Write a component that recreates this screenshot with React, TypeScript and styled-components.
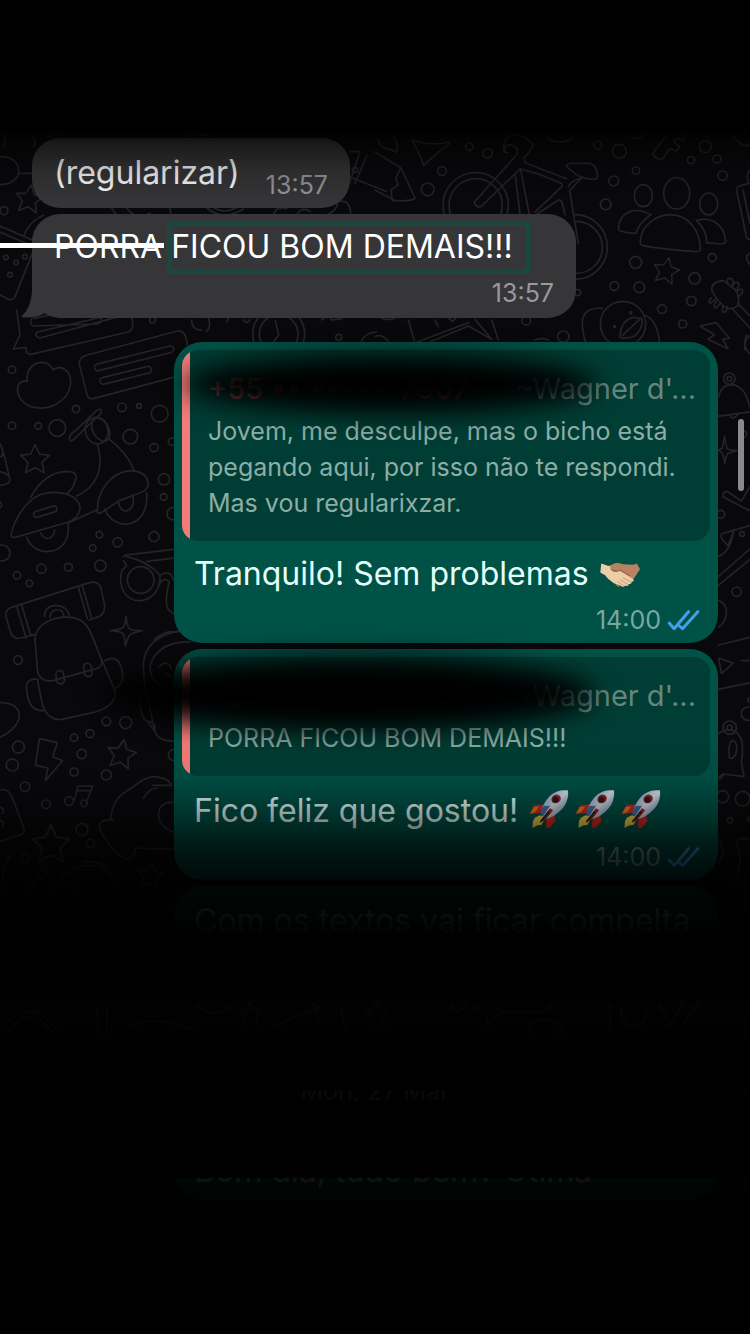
import React from "react";
import styled, { createGlobalStyle } from "styled-components";

const GlobalStyle = createGlobalStyle`
  * { box-sizing: border-box; }
  body {
    margin: 0;
    background: #000;
    font-family: Inter, Roboto, "Liberation Sans", sans-serif;
  }
`;

const Screen = styled.div`
  position: relative;
  min-height: 100vh;
  background: #09090c;
  overflow: hidden;
`;

const WallpaperSvg = styled.svg`
  position: absolute;
  top: 0;
  left: 0;
  width: 100%;
  height: auto;
  fill: none;
  stroke: #242426;
  stroke-width: 5;
  stroke-linejoin: round;
  stroke-linecap: round;
`;

const Chat = styled.main`
  position: relative;
  display: flex;
  flex-direction: column;
  gap: 6px;
  padding: 138px 32px 128px;
`;

const Bubble = styled.article<{ $mine?: boolean }>`
  position: relative;
  align-self: ${(p) => (p.$mine ? "flex-end" : "flex-start")};
  width: 100%;
  max-width: 544px;
  border-radius: 28px;
  padding: ${(p) => (p.$mine ? "8px" : "12px 22px 10px")};
  background: ${(p) => (p.$mine ? "#005146" : "#363638")};
  color: ${(p) => (p.$mine ? "#e4fffa" : "#fff")};
`;

const ShortBubble = styled(Bubble)`
  display: flex;
  justify-content: space-between;
  align-items: flex-end;
  max-width: 318px;
  padding: 14px 22px 8px;
`;

const FirstReply = styled(Bubble)`
  margin-top: 18px;
`;

const TextBubble = styled(Bubble)`
  padding-top: 2px;
`;

const Message = styled.p<{ $mine?: boolean }>`
  margin: 0;
  padding: ${(p) => (p.$mine ? "12px 12px 0" : "0")};
  font-size: 32px;
  line-height: 42px;
  white-space: nowrap;
`;

const ShortMessage = styled(Message)`
  padding-bottom: 6px;
`;

const Meta = styled.footer<{ $mine?: boolean }>`
  display: flex;
  justify-content: flex-end;
  align-items: center;
  gap: 6px;
  margin-top: 10px;
  padding-right: ${(p) => (p.$mine ? "10px" : "0")};
  font-size: 25px;
  line-height: 30px;
  color: ${(p) => (p.$mine ? "#7da69e" : "#98989e")};
`;

const ShortMeta = styled(Meta)`
  margin-top: 0;
`;

const Quote = styled.blockquote`
  margin: 0;
  padding: 20px 14px 20px 26px;
  border-radius: 16px;
  background: linear-gradient(to right, #f47b78 8px, #003d34 8px);
  color: #8dada7;
  font-size: 25px;
  line-height: 36px;
`;

const QuoteHead = styled.header`
  display: flex;
  justify-content: space-between;
  margin-bottom: 5px;
  font-size: 29px;
  line-height: 38px;
  white-space: nowrap;
`;

const Phone = styled.span`
  font-weight: 500;
  color: #a8504e;
`;

const Author = styled.span`
  color: #66877f;
`;

const QuoteLine = styled.p`
  margin: 0;
  white-space: nowrap;
`;

const Struck = styled.s`
  position: relative;
  text-decoration: none;
  &::after {
    content: "";
    position: absolute;
    left: -56px;
    right: -2px;
    top: 50%;
    height: 5px;
    margin-top: -4px;
    background: #fff;
  }
`;

const Marked = styled.mark`
  position: relative;
  background: none;
  color: inherit;
  &::after {
    content: "";
    position: absolute;
    inset: -6px -18px -8px -4px;
    border: 5px solid #1b473e;
  }
`;

const Tail = styled.svg`
  position: absolute;
  left: -12px;
  bottom: 0;
  width: 40px;
  height: 32px;
  fill: #363638;
`;

const Smudge = styled.div<{ $left: number; $right: number; $top: number; $height: number }>`
  position: absolute;
  left: ${(p) => p.$left}px;
  right: ${(p) => p.$right}px;
  top: ${(p) => p.$top}px;
  height: ${(p) => p.$height}px;
  border-radius: 50%;
  background: #000;
  filter: blur(13px);
`;

const Day = styled.time`
  align-self: center;
  margin-top: 120px;
  margin-bottom: 24px;
  font-size: 25px;
  line-height: 30px;
  color: #999;
`;

const Shade = styled.div`
  position: absolute;
  inset: 0;
  pointer-events: none;
  background: linear-gradient(
    to bottom,
    #000 0, #000 130px,
    rgba(0, 0, 0, 0.55) 142px,
    rgba(0, 0, 0, 0.2) 170px,
    rgba(0, 0, 0, 0) 205px,
    rgba(0, 0, 0, 0) 740px,
    rgba(0, 0, 0, 0.08) 780px,
    rgba(0, 0, 0, 0.35) 812px,
    rgba(0, 0, 0, 0.68) 845px,
    rgba(0, 0, 0, 0.84) 872px,
    rgba(0, 0, 0, 0.93) 892px,
    rgba(0, 0, 0, 0.95) 915px,
    #000 938px, #000 1000px,
    rgba(0, 0, 0, 0.8) 1001px,
    rgba(0, 0, 0, 0.88) 1030px,
    #000 1048px, #000 1090px,
    rgba(0, 0, 0, 0.93) 1091px,
    rgba(0, 0, 0, 0.96) 1101px,
    #000 1102px, #000 1177px,
    rgba(0, 0, 0, 0.93) 1178px,
    rgba(0, 0, 0, 0.95) 1199px,
    #000 1200px
  );
`;

const ScrollThumb = styled.div`
  position: absolute;
  top: 419px;
  right: 6px;
  width: 6px;
  height: 72px;
  border-radius: 3px;
  background: #89898b;
`;

const EmojiSvg = styled.svg<{ $tall?: boolean }>`
  width: 42px;
  height: ${(p) => (p.$tall ? 42 : 30)}px;
  margin-left: 1px;
  margin-right: 3px;
  vertical-align: ${(p) => (p.$tall ? "-8px" : "-5px")};
`;

const TicksSvg = styled.svg`
  width: 33px;
  height: 22px;
  fill: none;
  stroke: #429fe8;
  stroke-width: 9;
  stroke-linecap: round;
  stroke-linejoin: round;
`;

const Ticks = () => (
  <TicksSvg viewBox="650 818 98 66" role="img" aria-label="Lida">
    <path d="M656 860l15 17 43-51M687 869l9 8 46-51" />
  </TicksSvg>
);

const Handshake = () => (
  <EmojiSvg viewBox="30 30 130 85" role="img" aria-label="Aperto de mãos">
    <path fill="#b98260" d="M64 43l15-7c8-2 16 0 24 3l34 2 10-4 10 18-18 27-8 7-32-26-17-3-12-4c-7-5-8-9-6-13z" />
    <path fill="#eccda6" d="M37 37l20 7 9 1c-3 7 1 13 8 15 7 3 15 1 20-1l24 14 18 12c3 4 0 9-5 8 1 6-4 9-9 7 0 6-6 8-11 5-3 6-10 5-15 1L76 98 58 84 49 73 34 65z" />
    <path fill="none" stroke="#c99c76" strokeWidth="3" strokeLinecap="round" d="M105 82l24 12M96 88l23 14M88 94l18 12M82 101l9 7M66 45c-3 8 2 14 9 16" />
    <path fill="none" stroke="#8e5f45" strokeWidth="3" d="M68 55c9 7 19 8 28 2l30 19" />
  </EmojiSvg>
);

const Rocket = ({ id }: { id: string }) => (
  <EmojiSvg $tall viewBox="22 20 130 130" role="img" aria-label="Foguete">
    <defs>
      <linearGradient id={id} x1="0" y1="0" x2="1" y2="1">
        <stop offset="0" stopColor="#5f93c9" />
        <stop offset=".5" stopColor="#dde4ec" />
        <stop offset="1" stopColor="#4a78ad" />
      </linearGradient>
    </defs>
    <path fill="#e5cf49" d="M58 104l20 4-14 26-14 2-14 8 1-20 6-12z" />
    <path fill="#d8281d" d="M42 73l30-2-12 26-34 4z" />
    <path fill="#ef7a24" d="M40 79l16-1-12 17-16 4z" />
    <path fill="#d8281d" d="M80 115l22-12 5 18-17 22-13 1 1-13z" />
    <path fill={`url(#${id})`} d="M146 28c3 34-12 57-44 79L80 116 61 98c7-30 25-59 53-68 11-4 23-4 32-2z" />
    <path fill="#3f70ac" d="M70 76c-6 8-8 15-9 22l9 8 20-31z" />
    <path fill="#a62323" d="M90 83L60 121l12 2 28-34z" />
    <path fill="#2d2628" d="M84 91l-26 34 5 2 28-33z" />
    <ellipse cx="109" cy="54" rx="15" ry="13" fill="#8e2427" transform="rotate(-30 109 54)" />
    <ellipse cx="107" cy="56" rx="9" ry="9" fill="#2b1a20" />
  </EmojiSvg>
);

const STAR = "M0-42L13-14 43-10 21 11 28 42 0 27-28 42-21 11-43-10-13-14z";

const Dots = ({ at }: { at: number[][] }) => (
  <>
    {at.map(([x, y, r]) => (
      <circle key={`${x}-${y}`} cx={x} cy={y} r={r} />
    ))}
  </>
);

const Wallpaper = () => (
  <WallpaperSvg viewBox="0 0 750 1334" aria-hidden="true">
    <g transform="translate(0 120) scale(.33333)">
      <path d="M0 110c34-2 56 18 56 42S34 194 0 194M56 160h42M0 40c18 0 20 24 10 40M100 50q10 20 0 30" />
      <path transform="translate(88 235) scale(.95) rotate(8)" d={STAR} />
      <Dots at={[[12, 272, 12], [18, 412, 7], [48, 427, 7], [75, 410, 7], [30, 464, 7], [1016, 652, 9], [458, 600, 9], [1065, 150, 8]]} />
      <path d="M0 318l97 42M0 336l97 42M72 345q20-45 60-60M97 400L45 530q-6 12-20 8L0 525" />
      <path d="M335 264l20 30M380 264q30 40 70 16M510 264q0 40 40 30M620 264q50 40 110 4M640 262q34 22 70 0M820 285q10-30 40-18M890 284q15-25 40-10M980 285q40-20 30-40 40-10 42 35M150 50q10-10 30-8M560 50q40-15 70 0" />
      <circle cx="836" cy="642" r="78" /><circle cx="836" cy="642" r="58" />
      <path d="M826 602l10 42-18 26M575 600q0 30 30 30M620 634q14-14 6-38M680 606l6-12M730 600q10 14 20 0M965 600q20-20 30 0l30-4M1080 690q0-50 50-54" />
      <path d="M1050 95h30M1048 170l110 44M1080 95l-32 95M1100 108l-36 84" />
    </g>

    <g transform="translate(375 120) scale(.33333)">
      <path d="M0 96l78 48 42 90q-6 10-60 8L0 210M78 144l-16 30 8 20-22 16 4 32M110 60q60 20 112 6 6 6-20 20l-56 50q-8-30-36-76zM8 55q4 30 40 34l16 8q10-20-10-50" />
      <circle cx="302" cy="256" r="98" /><circle cx="302" cy="256" r="80" />
      <path d="M298 246l122-136q16-16 0-30-22-14-32 6 0 14 10 12-16 2-12-20 4-32 34-34 30 2 54 30-2 14-24 36-8 10 4 20l120 46M318 260q-16 4-20-14M318 260l118-114M420 160l16 130M436 146l28 142M440 148q60 14 118 42 8 4 0 12l-78 74M574 138q6-10 20-8h50q20 4 24 38-2 12-16 10-40-4-60-24-10-6-18-16zM580 200q10-20 40-26l-36 38 26 158M480 286l70-46q8-2 12 10l8 34" />
      <path d="M600 284a97 97 0 1 1 0 194M604 304a78 78 0 1 1 0 156M515 50q10 16 40 16 34-4 38-16M770 50q20 16 36-8" />
      <ellipse cx="805" cy="227" rx="27" ry="33" /><ellipse cx="905" cy="220" rx="39" ry="47" /><ellipse cx="1001" cy="252" rx="27" ry="33" />
      <path d="M796 366c0-50 50-82 90-82 56 0 90 50 90 104-2 8-10 8-20 6-60-4-110-8-154-18-6-2-8-6-6-10zM828 284c-50-26-94-10-98 42 0 8 22 12 54 14 4-20 20-40 44-56zM964 302c44-14 84 10 88 62 0 6-6 8-14 8l-44-4c4-20-10-50-30-66zM870 50l-36 50q0 10 16 16 10 6 16-4l18-26 20 8 10-14-18-14 8-12 20 8 14-20M1074 50q40 40 51 22" />
      <path transform="translate(874 450) scale(.9) rotate(12)" d={STAR} />
      <Dots at={[[283, 80, 11], [338, 100, 14], [201, 153, 13], [158, 208, 19], [668, 75, 12], [733, 94, 21], [783, 152, 11], [716, 183, 15], [692, 253, 16], [991, 80, 18], [948, 120, 11], [1026, 117, 12], [1043, 167, 14], [1012, 413, 12], [782, 427, 18], [718, 498, 13], [793, 502, 16], [959, 475, 17], [949, 543, 14], [861, 567, 13], [923, 612, 12], [454, 602, 13], [565, 650, 17], [608, 518, 9], [767, 578, 3], [719, 620, 3]]} />
      <path d="M1125 150q-14 10-4 40l-32 10q-8 10 0 30l26 124 10 6M1104 210l21 100M1125 400q-20 10 0 34M1010 510q0-26 36-28 16 14 40 30l6 40q-12 16-30 14-28-8-52-56zM1058 490q-4-18 12-14 10 6 0 24M1070 502q10-22 22-12 2 10-10 24M1086 514q20-14 16 4l-12 14M1010 534q-14 10-4 16l16-12M1024 544q-14 18 0 20l14-16M1044 558q-6 22 8 18l6-16M1088 550l37 38M1070 564l55 60" />
      <circle cx="744" cy="612" r="68" />
      <path d="M735 652q0-50 40-60l26 4q4 30-22 52-22 10-44 4zM742 646l52-48M682 565q-56-4-60 40 0 30 10 64M806 585q40 10 48 84M975 618l48-10 40 46-20 4 16 28-60-28 20-14zM1110 690q-4-30 15-44M100 600l20 70M120 668l160-60M160 668l120-50 70 40-50-60M350 600l20 60M180 600l10 20M215 590l18 14 14-14M0 650q20-10 40 14M480 660q20-10 40 0M20 595q20 8 40 0" />
    </g>

    <g transform="translate(0 320) scale(.33333)">
      <path d="M50-30l10 75-20 42 38-5q-2 20 14 21l293-67q18-8 12-36l-12-40M100-4l200-44M290 12q20-5 14-14l-4-12M100 18q-14-6-6-20M290 12l-190 6M112 36l260-60M120 54l236-64M112 36q-12 12 8 18" />
      <path d="M262 105l270-72q20-4 26 22l4 20M262 105q-28 8-24 28l22 88q4 18 20 15l240-64" />
      <rect x="280" y="105" width="245" height="20" rx="10" transform="rotate(-14 402 115)" />
      <rect x="298" y="156" width="158" height="20" rx="10" transform="rotate(-14 377 166)" />
      <path d="M82 184c-8-60 62-74 76-34 28-18 56 2 54 44-10 56-70 80-120 66-34-14-46-44-36-66 4-8 14-12 26-10zM0 372q10 16 30 108 0 12-30 16M0 410q10 0 6-10M0 455q14 4 22 10" />
      <path transform="translate(105 416)" d={STAR} />
      <path d="M208 356q2-14 16-22l66-62q14-10 14 4-2 8-16 18l-64 62q-12 12-16 0z" />
      <ellipse cx="290" cy="332" rx="34" ry="40" transform="rotate(-15 290 332)" />
      <ellipse cx="302" cy="328" rx="24" ry="38" transform="rotate(-28 302 328)" />
      <path d="M292 372c24 80-8 132-62 156M328 358q50 36 74 92M92 532q40-74 106-78 34 0 30 20-6 30-26 46M34 640c14-56 56-112 100-120 60-10 100 10 106 40 0 24-12 36-34 46l-160 46q-14 2-12-12zM206 608l84-38M292 576c-2-62 40-120 100-124 44 2 54 24 52 46-8 24-50 26-90 46l-50 34q-12 4-12-2zM314 568c30 70 134 60 126-50M80 652c20 64 136 60 124-40M122 640q10 18 26 14 16-6 16-24M356 544c0 44 56 36 42-18" />
      <rect x="100" y="566" width="72" height="18" rx="9" transform="rotate(-17 136 575)" />
      <Dots at={[[36, 149, 11], [228, 267, 11], [366, 262, 13], [417, 258, 7], [479, 281, 25], [36, 317, 11], [115, 318, 10], [172, 324, 25], [391, 350, 22], [462, 383, 12], [516, 365, 11], [492, 478, 17], [491, 531, 10], [298, 644, 10], [353, 667, 14], [462, 650, 15], [278, 684, 10], [6, 699, 24], [124, 746, 14], [205, 742, 12], [301, 737, 17], [51, 766, 11], [88, 790, 10], [520, 581, 19], [-4, 555, 9]]} />
      <path d="M370 710q6-8 20-6l150-18M440 724l120-14M370 722l10 14-14 16M380 710q64 14 100 56 30-20 42 16M480 790q12-20 28-4c-16 60-10 90 14 94" />
      <circle cx="422" cy="780" r="40" />
      <path d="M366 750c-14 50 10 94 56 92 40-4 60-40 58-74M34 862l234-74q26-6 34 14l12 54q0 28-18 34l-28 10M34 862q-20 8-16 28l14 48q8 20 30 16l42-10M50 858l28 96M64 852l28 94M234 798l28 98M246 794l28 98M134 890c-4-46 68-44 74-2M150 892c0-30 42-30 42-2M462 960q30-30 70-24" />
    </g>

    <g transform="translate(0 620) scale(.33333)">
      <path d="M105 60c0-40 40-64 80-68 60-4 76 20 90 52l30 76q4 20-16 26l-130 36q-40 4-46-26zM112 178l14 70c8 34 30 54 60 50l100-22q60-18 60-60l-40-96M114 178q-40-4-34 30 4 66 50 64M314 122c40-24 56 20 54 54q-6 22-22 28" />
      <rect x="169" y="152" width="23" height="40" rx="11" transform="rotate(-8 180 172)" />
      <rect x="252" y="130" width="23" height="40" rx="11" transform="rotate(-8 263 150)" />
      <path transform="translate(378 34)" d="M0-45Q5-12 10-8q10 6 38 6Q16 6 12 10q-6 6-14 34Q-4 12-10 6q-6-6-36-8Q-12-6-8-12-2-20 0-45z" />
      <path d="M572 34c-90-6-144 44-142 110l6 70M572 66c-80-4-120 40-122 80 2 30 20 52 72 64M436 212q-20 10-16 40 4 46 22 52l22 30M440 214l24 120q10 30 60 30M442 306q20-6 24 20M478 142q10-20 30-8l6 12M498 160q8 12 26 10" />
      <Dots at={[[54, 120, 13], [319, 304, 13], [377, 308, 18], [270, 341, 12], [222, 353, 11], [55, 381, 18], [245, 402, 14], [37, 435, 18], [222, 456, 12], [319, 465, 15], [75, 500, 14], [138, 553, 13], [246, 628, 18], [271, 670, 13], [77, 714, 12], [125, 762, 16], [88, 796, 12], [522, 405, 17]]} />
      <path d="M0 248c80 0 74 70 0 104M118 356l54 12-14 42 30 12-52 60 8-38-38-8z" />
      <path transform="translate(365 400) rotate(10)" d={STAR} />
      <path transform="translate(153 670) scale(1.3)" d={STAR} />
      <path transform="translate(450 765) scale(.9) rotate(8)" d={STAR} />
      <path d="M222 544l12-46h44l-20 52M232 512h40" /><circle cx="207" cy="543" r="13" /><circle cx="252" cy="550" r="10" />
      <path d="M0 510q24-4 34 16l38 98q4 16-14 22L0 664M0 562q18 8 6 18M0 600q18 8 6 18M332 598c6-56 24-72 66-96 20-16 50-40 80-30q30 6 36 24h-56M430 534q20-30 40-30M340 600q-50-4-40 30c14 30 60 90 84 86q24-4 20-32l120 4M522 548c-60-10-64 70 0 88M8 820q-6-80 24-116M150 830c-10-60 90-50 84 0M180 780c40-60 130-60 180 10M250 726q50-4 70 20" />
    </g>

    <g transform="translate(450 335) scale(.33333)">
      <Dots at={[[838, 131, 17], [838, 131, 7], [812, 538, 12], [876, 597, 7], [860, 770, 14], [880, 297, 10]]} />
      <path d="M806 185c6-30 26-36 40-36 34 4 48 40 50 58l10 24M804 244l100-14M838 240q10 20 28-6M824 305q4 34 10 38l26 4-26 8q-6 8-10 30-4-30-8-32l-12-8 12-4zM820 486q-4-18 14-16l40 28 30-50M820 486l76 40 10-10M906 570l-90 26q-6 4 0 16l18 20 16-40M806 664q36-14 46-80M804 726l102-90M804 752l102-84M806 796c40 20 20 70 0 80M806 930l100-24M890 0q-16 40 16 60" />
    </g>

    <g transform="translate(450 640) scale(.33333)">
      <path d="M806 54l44 16-36 30zM874 62h30M804 148q50-10 100-20M806 280q50-30 70 24 4 40-2 60l8 46-62-8-14 8M822 404l-14 14M838 350c-4-50 10-56 20-40 6 20-2 50-20 44zM806 600q24 30 0 70M904 600q-50-14-42 20 16 30 0 80-20 40 20 40" />
      <Dots at={[[839, 263, 20], [839, 263, 8], [894, 221, 20], [818, 470, 18], [878, 476, 22], [840, 541, 8], [898, 180, 5], [898, 536, 5]]} />
    </g>

    <g transform="translate(0 980) scale(.33333)">
      <path d="M10 140c50-66 110-60 160 10M30 150c40-50 80-50 120 0M290 80l6 90M320 80v90M390 140c60-30 120-16 190 10M590 75q50 50 100 0M820 140l140-60M940 70l20 60M1020 80l20 70M1220 56h90M1350 70q20 50 50 0M1420 80q50 20 40 60l40-44h140l20-30M1590 190v-60q40-20 90 0v50M1830 70v80M1860 80c10 80 80 80 80 0M1980 70l30 70 40-80M2050 130l50-70" />
      <path transform="translate(750 100) scale(.8)" d={STAR} />
      <path transform="translate(1130 100) scale(.8)" d={STAR} />
    </g>
  </WallpaperSvg>
);

interface ReplyProps {
  phone: string;
  lines: string[];
}

const QuotedMessage = ({ phone, lines }: ReplyProps) => (
  <Quote>
    <QuoteHead>
      <Phone>{phone}</Phone>
      <Author>~Wagner d'...</Author>
    </QuoteHead>
    {lines.map((line) => (
      <QuoteLine key={line}>{line}</QuoteLine>
    ))}
  </Quote>
);

export default function App() {
  return (
    <>
      <GlobalStyle />
      <Screen>
        <Wallpaper />
        <Chat>
          <ShortBubble>
            <ShortMessage>(regularizar)</ShortMessage>
            <ShortMeta>13:57</ShortMeta>
          </ShortBubble>
          <Bubble>
            <Tail viewBox="0 0 40 32" aria-hidden="true">
              <path d="M12 0v6Q11 22 1 31q14 2 24-4l15 5V0z" />
            </Tail>
            <Message>
              <Struck>PORRA</Struck> <Marked>FICOU BOM DEMAIS!!!</Marked>
            </Message>
            <Meta>13:57</Meta>
          </Bubble>
          <FirstReply $mine>
            <QuotedMessage
              phone="+55 •• •••••-7907"
              lines={[
                "Jovem, me desculpe, mas o bicho está",
                "pegando aqui, por isso não te respondi.",
                "Mas vou regularixzar.",
              ]}
            />
            <Message $mine>
              Tranquilo! Sem problemas <Handshake />
            </Message>
            <Meta $mine>
              14:00 <Ticks />
            </Meta>
            <Smudge $left={10} $right={120} $top={13} $height={58} />
          </FirstReply>
          <Bubble $mine>
            <QuotedMessage phone="+55 •• •••••-••07" lines={["PORRA FICOU BOM DEMAIS!!!"]} />
            <Message $mine>
              Fico feliz que gostou! <Rocket id="hull-a" />
              <Rocket id="hull-b" />
              <Rocket id="hull-c" />
            </Message>
            <Meta $mine>
              14:00 <Ticks />
            </Meta>
            <Smudge $left={-70} $right={124} $top={8} $height={74} />
          </Bubble>
          <TextBubble $mine>
            <Message $mine>Com os textos vai ficar compelta</Message>
          </TextBubble>
          <Day>Mon, 27 Mar</Day>
          <TextBubble $mine>
            <Message $mine>Bom dia, tudo bem? Ótima</Message>
          </TextBubble>
        </Chat>
        <ScrollThumb />
        <Shade />
      </Screen>
    </>
  );
}
